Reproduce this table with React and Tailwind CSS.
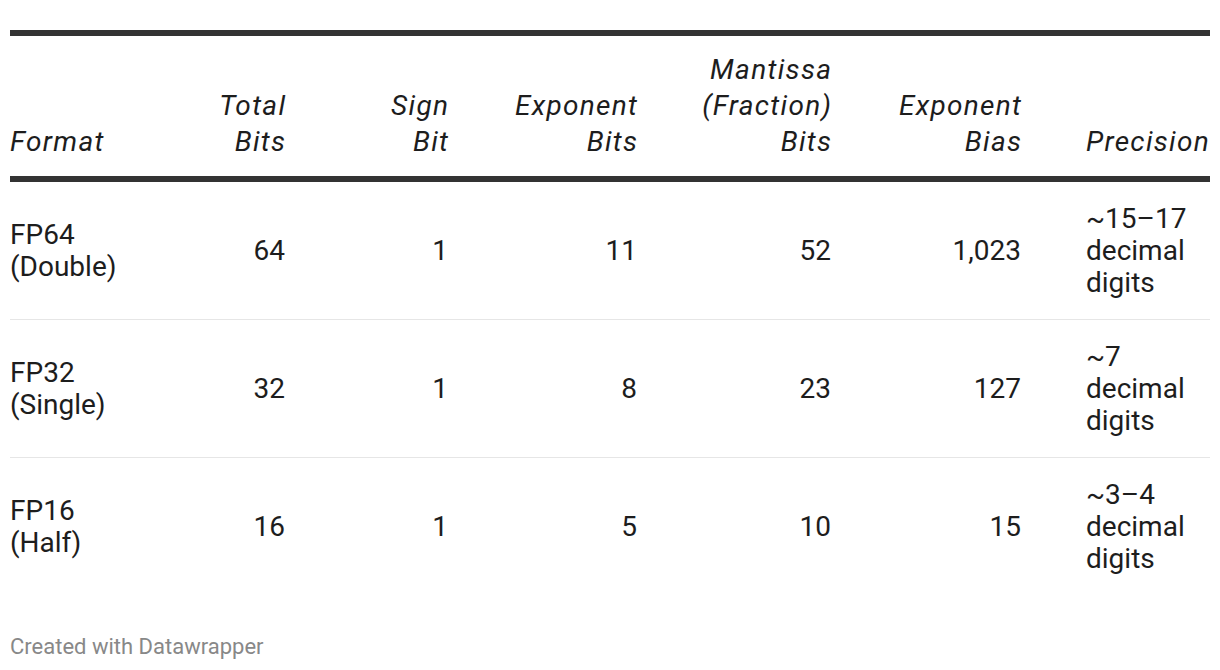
const columns = [
  { label: ["Format"], align: "left" },
  { label: ["Total", "Bits"], align: "right" },
  { label: ["Sign", "Bit"], align: "right" },
  { label: ["Exponent", "Bits"], align: "right" },
  { label: ["Mantissa", "(Fraction)", "Bits"], align: "right" },
  { label: ["Exponent", "Bias"], align: "right" },
  { label: ["Precision"], align: "left" },
];

const rows = [
  { format: ["FP64", "(Double)"], total: "64", sign: "1", exp: "11", mant: "52", bias: "1,023", precision: ["~15–17", "decimal", "digits"] },
  { format: ["FP32", "(Single)"], total: "32", sign: "1", exp: "8", mant: "23", bias: "127", precision: ["~7", "decimal", "digits"] },
  { format: ["FP16", "(Half)"], total: "16", sign: "1", exp: "5", mant: "10", bias: "15", precision: ["~3–4", "decimal", "digits"] },
];

const gridCols = "grid grid-cols-[170px_105px_163px_189px_194px_190px_189px]";

function Lines({ lines }) {
  return lines.map((l, i) => <div key={i}>{l}</div>);
}

export default function App() {
  return (
    <div className="w-[1220px] h-[670px] bg-white px-[10px] pt-[30px] text-[#1d1d1d] font-['Roboto',sans-serif]">
      <div className="border-t-[6px] border-b-[6px] border-[#333333]">
        <div className={gridCols + " items-end py-[16px] text-[28px] leading-[36px] italic tracking-[1.3px]"}>
          {columns.map((c, i) => (
            <div key={i} className={c.align === "right" ? "text-right -mr-[1.3px]" : i === 6 ? "pl-[65px] whitespace-nowrap" : ""}>
              <Lines lines={c.label} />
            </div>
          ))}
        </div>
      </div>
      {rows.map((r, i) => (
        <div
          key={i}
          className={gridCols + " items-center py-[20.5px] text-[28px] leading-[32px] " + (i < rows.length - 1 ? "border-b border-[#e6e6e6]" : "")}
        >
          <div><Lines lines={r.format} /></div>
          <div className="text-right">{r.total}</div>
          <div className="text-right">{r.sign}</div>
          <div className="text-right">{r.exp}</div>
          <div className="text-right">{r.mant}</div>
          <div className="text-right">{r.bias}</div>
          <div className="pl-[65px]"><Lines lines={r.precision} /></div>
        </div>
      ))}
      <div className="mt-[40px] text-[22px] leading-[24px] text-[#888888]">Created with Datawrapper</div>
    </div>
  );
}
